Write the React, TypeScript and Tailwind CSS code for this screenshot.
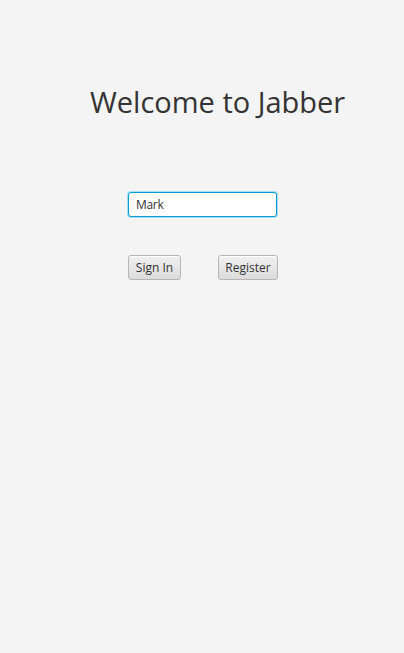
import { useState } from 'react';

export default function App() {
  const [name, setName] = useState('Mark');

  return (
    <main className="h-[653px] w-full bg-[#f4f4f4] text-[#333] font-['Open_Sans',sans-serif]">
      <div className="flex flex-col pt-[84px]">
        <h1 className="pl-[90px] text-[29px] leading-[36px] text-[#333]">
          Welcome to Jabber
        </h1>

        <div className="mt-[71px] pl-[128px]">
          <input
            value={name}
            onChange={(e) => setName(e.target.value)}
            className="h-[25px] w-[149px] rounded-[3px] border border-[#0a9ad6] bg-white px-[7px] text-[12px] tracking-[-0.3px] text-[#333] outline-none shadow-[0_0_0_1px_#a6def3] caret-[#333]"
          />
        </div>

        <div className="mt-[38px] flex gap-[37px] pl-[128px]">
          <button className="h-[25px] w-[53px] rounded-[3px] border border-[#b5b5b5] bg-gradient-to-b from-[#f0f0f0] to-[#dcdcdc] text-[12px] text-[#333] shadow-[inset_0_1px_0_#fff]">
            Sign In
          </button>
          <button className="h-[25px] w-[60px] rounded-[3px] border border-[#b5b5b5] bg-gradient-to-b from-[#f0f0f0] to-[#dcdcdc] text-[12px] text-[#333] shadow-[inset_0_1px_0_#fff]">
            Register
          </button>
        </div>
      </div>
    </main>
  );
}
